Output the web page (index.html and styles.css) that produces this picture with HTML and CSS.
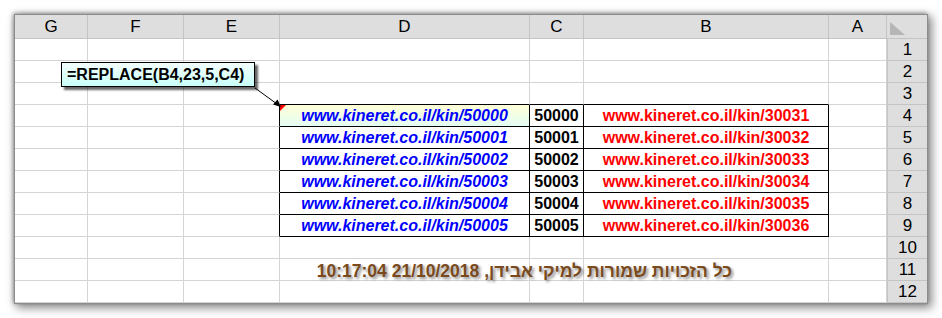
FILE: index.html
```html
<!DOCTYPE html>
<html lang="he">
  <head>
    <meta charset="UTF-8" />
    <meta name="viewport" content="width=device-width, initial-scale=1.0" />
    <title>REPLACE</title>
    <link rel="stylesheet" href="styles.css">
  </head>
  <body>
    <div class="page">
      <table class="sheet">
        <colgroup>
          <col class="w-g" />
          <col class="w-f" />
          <col class="w-e" />
          <col class="w-d" />
          <col class="w-c" />
          <col class="w-b" />
          <col class="w-a" />
          <col class="w-row" />
        </colgroup>
        <tr class="head">
          <th>G</th><th>F</th><th>E</th><th>D</th><th>C</th><th>B</th><th>A</th>
          <th class="corner"><span class="select-all"></span></th>
        </tr>
        <tr><td></td><td></td><td></td><td></td><td></td><td></td><td></td><td class="num">1</td></tr>
        <tr><td></td><td></td><td></td><td></td><td></td><td></td><td></td><td class="num">2</td></tr>
        <tr><td></td><td></td><td></td><td class="top"></td><td class="top"></td><td class="top"></td><td></td><td class="num">3</td></tr>
        <tr>
          <td></td><td></td><td class="edge"></td>
          <td class="box url first">www.kineret.co.il/kin/50000</td>
          <td class="box id">50000</td>
          <td class="box src">www.kineret.co.il/kin/30031</td>
          <td></td><td class="num">4</td>
        </tr>
        <tr>
          <td></td><td></td><td class="edge"></td>
          <td class="box url">www.kineret.co.il/kin/50001</td>
          <td class="box id">50001</td>
          <td class="box src">www.kineret.co.il/kin/30032</td>
          <td></td><td class="num">5</td>
        </tr>
        <tr>
          <td></td><td></td><td class="edge"></td>
          <td class="box url">www.kineret.co.il/kin/50002</td>
          <td class="box id">50002</td>
          <td class="box src">www.kineret.co.il/kin/30033</td>
          <td></td><td class="num">6</td>
        </tr>
        <tr>
          <td></td><td></td><td class="edge"></td>
          <td class="box url">www.kineret.co.il/kin/50003</td>
          <td class="box id">50003</td>
          <td class="box src">www.kineret.co.il/kin/30034</td>
          <td></td><td class="num">7</td>
        </tr>
        <tr>
          <td></td><td></td><td class="edge"></td>
          <td class="box url">www.kineret.co.il/kin/50004</td>
          <td class="box id">50004</td>
          <td class="box src">www.kineret.co.il/kin/30035</td>
          <td></td><td class="num">8</td>
        </tr>
        <tr>
          <td></td><td></td><td class="edge"></td>
          <td class="box url">www.kineret.co.il/kin/50005</td>
          <td class="box id">50005</td>
          <td class="box src">www.kineret.co.il/kin/30036</td>
          <td></td><td class="num">9</td>
        </tr>
        <tr><td></td><td></td><td></td><td></td><td></td><td></td><td></td><td class="num">10</td></tr>
        <tr><td></td><td></td><td></td><td></td><td></td><td></td><td></td><td class="num">11</td></tr>
        <tr><td></td><td></td><td></td><td></td><td></td><td></td><td></td><td class="num">12</td></tr>
      </table>

      <!-- comment on D4 and its pointer -->
      <div class="comment">=REPLACE(B4,23,5,C4)</div>
      <svg class="pointer" width="30" height="24" viewBox="0 0 30 24">
        <line x1="1" y1="1" x2="23" y2="17" stroke="#000" stroke-width="1" />
        <polygon points="27,20 19,17.5 23.5,12.5" fill="#000" />
      </svg>

      <div class="note" dir="rtl">כל הזכויות שמורות למיקי אבידן, 21/10/2018 10:17:04</div>
    </div>
  </body>
</html>
```

FILE: styles.css
```css
body {
  margin: 0;
  background-color: white;
  font-family: "Liberation Sans", Arial, sans-serif;
}
.page {
  position: relative;
  width: 942px;
  height: 318px;
}
.sheet {
  position: relative;
  top: 14px;
  left: 14px;
  table-layout: fixed;
  border-collapse: separate;
  border-spacing: 0;
  width: 914px;
  border: 1px solid #8c8c8c;
  box-shadow: 3px 3px 9px 1px rgba(0, 0, 0, 0.45), -1px -1px 4px rgba(0, 0, 0, 0.35);
  background-color: white;
}
.w-g { width: 73px; }
.w-f { width: 96px; }
.w-e { width: 96px; }
.w-d { width: 250px; }
.w-c { width: 54px; }
.w-b { width: 245px; }
.w-a { width: 58px; }
.w-row { width: 40px; }

tr {
  height: 22px;
}
tr.head {
  height: 24px;
}
th,
td {
  padding: 0;
  border-right: 1px solid #d4d4d4;
  border-bottom: 1px solid #d4d4d4;
  font-size: 16px;
  line-height: 20px;
  white-space: nowrap;
  overflow: visible;
}
th {
  background-color: #dedede;
  border-right-color: #c4c4c4;
  border-bottom-color: #c4c4c4;
  font-weight: normal;
  font-size: 17px;
  color: black;
  text-align: center;
}
th.corner {
  border-right: none;
  vertical-align: top;
  text-align: left;
}
.select-all {
  display: block;
  width: 15px;
  height: 13px;
  margin: 7px 0 0 3px;
  background-color: #b6b6b6;
  clip-path: polygon(0 0, 0 100%, 100% 100%);
}
td.num {
  background-color: #dedede;
  border-right: none;
  border-bottom-color: #c4c4c4;
  border-left: 1px solid #c4c4c4;
  text-align: center;
  font-size: 17px;
}

/* black frame around D4:B9 */
td.top {
  border-bottom-color: black;
}
td.edge {
  border-right-color: black;
}
td.box {
  border-right-color: black;
  border-bottom-color: black;
  font-weight: bold;
  text-align: center;
}
td.url {
  color: #0000ff;
  font-style: italic;
}
td.id {
  color: black;
}
td.src {
  color: #ff0000;
}
td.first {
  position: relative;
  background: linear-gradient(to bottom, #ffffd6, #e4fdf4);
}
/* comment marker */
td.first::before {
  content: "";
  position: absolute;
  top: 0;
  left: 0;
  width: 6px;
  height: 6px;
  background-color: #ff0000;
  clip-path: polygon(0 0, 100% 0, 0 100%);
}

.comment {
  position: absolute;
  left: 61px;
  top: 62px;
  width: 194px;
  height: 25px;
  box-sizing: border-box;
  border: 1px solid black;
  background: linear-gradient(to bottom, #f4fffd, #c8fff8);
  box-shadow: 3px 3px 2px rgba(0, 0, 0, 0.6);
  font-weight: bold;
  font-size: 16px;
  line-height: 23px;
  padding-left: 5px;
}
.pointer {
  position: absolute;
  left: 254px;
  top: 87px;
}
.note {
  position: absolute;
  right: 210px;
  top: 261px;
  font-size: 17.5px;
  line-height: 20px;
  font-weight: bold;
  color: #7a4a1c;
  text-shadow: 2px 2px 3px rgba(0, 0, 0, 0.45);
  white-space: nowrap;
}
```
